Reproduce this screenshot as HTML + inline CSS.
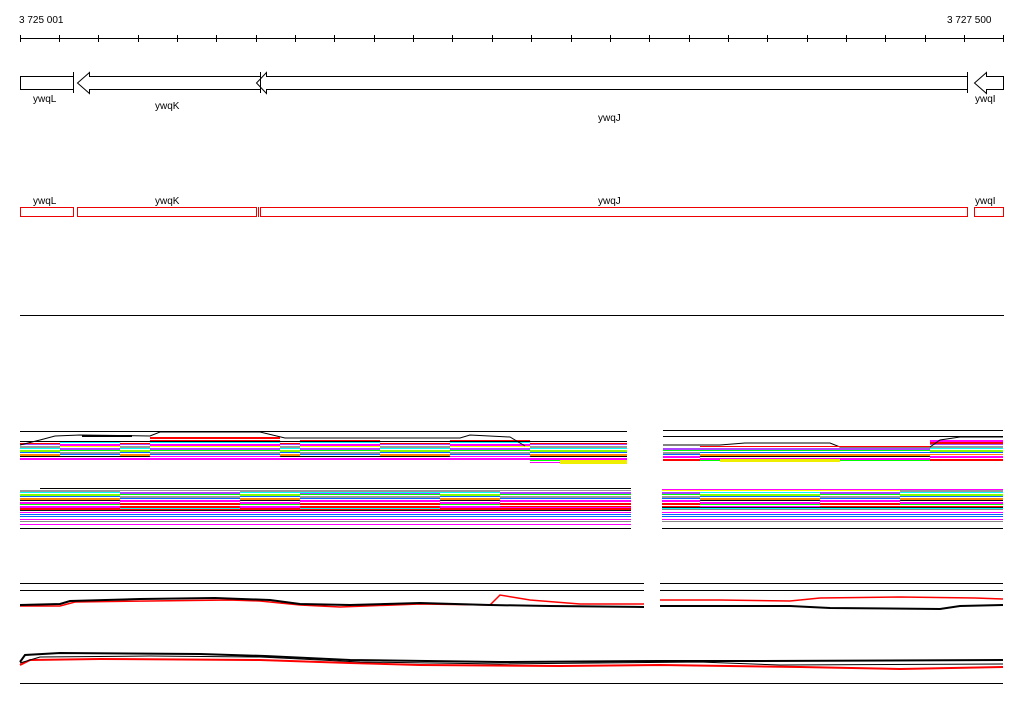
<!DOCTYPE html>
<html><head><meta charset="utf-8"><style>
html,body{margin:0;padding:0;background:#fff;}
svg{display:block}
text{font-family:"Liberation Sans",sans-serif;font-size:10px;fill:#000}
</style></head><body>
<svg width="1024" height="714" viewBox="0 0 1024 714" xmlns="http://www.w3.org/2000/svg" shape-rendering="crispEdges">
<defs>
<pattern id="s1" width="40" height="22" patternUnits="userSpaceOnUse">
<rect width="40" height="22" fill="#fff"/>
<rect y="0" width="40" height="2" fill="#f0f"/><rect y="2" width="40" height="2" fill="#f00"/><rect y="4" width="40" height="1" fill="#a4f"/><rect y="6" width="40" height="2" fill="#999"/><rect y="8" width="40" height="1" fill="#0ff"/><rect y="10" width="40" height="2" fill="#8f0"/><rect y="12" width="40" height="1" fill="#06f"/><rect y="14" width="40" height="2" fill="#f80"/><rect y="16" width="40" height="1" fill="#000"/><rect y="18" width="40" height="2" fill="#f0f"/><rect y="20" width="40" height="1" fill="#0f0"/>
</pattern>
<pattern id="s2" width="40" height="22" patternUnits="userSpaceOnUse">
<rect width="40" height="22" fill="#fff"/>
<rect y="0" width="40" height="2" fill="#f00"/><rect y="2" width="40" height="1" fill="#0ff"/><rect y="4" width="40" height="2" fill="#f0f"/><rect y="6" width="40" height="1" fill="#ff0"/><rect y="8" width="40" height="2" fill="#a4f"/><rect y="10" width="40" height="1" fill="#0f0"/><rect y="12" width="40" height="2" fill="#999"/><rect y="14" width="40" height="1" fill="#06f"/><rect y="16" width="40" height="2" fill="#f0f"/><rect y="19" width="40" height="2" fill="#f00"/>
</pattern>
<pattern id="s3" width="40" height="12" patternUnits="userSpaceOnUse">
<rect width="40" height="12" fill="#fff"/>
<rect y="0" width="40" height="1" fill="#06f"/><rect y="3" width="40" height="1" fill="#f0f"/><rect y="5" width="40" height="1" fill="#888"/><rect y="8" width="40" height="1" fill="#f0f"/><rect y="10" width="40" height="1" fill="#06f"/>
</pattern>
</defs>
<!-- ruler -->
<text x="19" y="23">3 725 001</text>
<text x="947" y="23">3 727 500</text>
<line x1="20" y1="38.5" x2="1004" y2="38.5" stroke="#000"/>
<g stroke="#000">
<line x1="20.5" y1="35" x2="20.5" y2="42"/><line x1="59.5" y1="35" x2="59.5" y2="42"/><line x1="98.5" y1="35" x2="98.5" y2="42"/><line x1="138.5" y1="35" x2="138.5" y2="42"/><line x1="177.5" y1="35" x2="177.5" y2="42"/><line x1="216.5" y1="35" x2="216.5" y2="42"/><line x1="256.5" y1="35" x2="256.5" y2="42"/><line x1="295.5" y1="35" x2="295.5" y2="42"/><line x1="334.5" y1="35" x2="334.5" y2="42"/><line x1="374.5" y1="35" x2="374.5" y2="42"/><line x1="413.5" y1="35" x2="413.5" y2="42"/><line x1="452.5" y1="35" x2="452.5" y2="42"/><line x1="492.5" y1="35" x2="492.5" y2="42"/><line x1="531.5" y1="35" x2="531.5" y2="42"/><line x1="571.5" y1="35" x2="571.5" y2="42"/><line x1="610.5" y1="35" x2="610.5" y2="42"/><line x1="649.5" y1="35" x2="649.5" y2="42"/><line x1="689.5" y1="35" x2="689.5" y2="42"/><line x1="728.5" y1="35" x2="728.5" y2="42"/><line x1="767.5" y1="35" x2="767.5" y2="42"/><line x1="807.5" y1="35" x2="807.5" y2="42"/><line x1="846.5" y1="35" x2="846.5" y2="42"/><line x1="885.5" y1="35" x2="885.5" y2="42"/><line x1="925.5" y1="35" x2="925.5" y2="42"/><line x1="964.5" y1="35" x2="964.5" y2="42"/><line x1="1003.5" y1="35" x2="1003.5" y2="42"/>
</g>
<!-- genes -->
<g fill="#fff" stroke="#000" stroke-width="1" shape-rendering="auto">
<rect x="20.5" y="76.5" width="53" height="13"/>
<polygon points="77.5,83 89.5,72.5 89.5,76.5 260.5,76.5 260.5,89.5 89.5,89.5 89.5,93.5"/>
<polygon points="256.5,83 266.5,72.5 266.5,76.5 967.5,76.5 967.5,89.5 266.5,89.5 266.5,93.5"/>
<polygon points="974.5,83 986.5,72.5 986.5,76.5 1003.5,76.5 1003.5,89.5 986.5,89.5 986.5,93.5"/>
<line x1="73.5" y1="72" x2="73.5" y2="93"/><line x1="260.5" y1="72" x2="260.5" y2="93"/><line x1="967.5" y1="72" x2="967.5" y2="93"/>
</g>
<text x="33" y="102">ywqL</text>
<text x="155" y="109">ywqK</text>
<text x="598" y="121">ywqJ</text>
<text x="975" y="102">ywqI</text>
<text x="33" y="204">ywqL</text>
<text x="155" y="204">ywqK</text>
<text x="598" y="204">ywqJ</text>
<text x="975" y="204">ywqI</text>
<g fill="none" stroke="#e00">
<rect x="20.5" y="207.5" width="53" height="9"/>
<rect x="77.5" y="207.5" width="179" height="9"/>
<rect x="260.5" y="207.5" width="707" height="9"/>
<line x1="258.5" y1="207" x2="258.5" y2="217"/>
<rect x="974.5" y="207.5" width="29" height="9"/>
</g>
<line x1="20" y1="315.5" x2="1004" y2="315.5" stroke="#000"/>

<!-- block A -->
<g>
<rect x="20" y="443" width="607" height="17" fill="url(#s1)"/>
<rect x="60" y="442" width="60" height="14" fill="url(#s2)"/>
<rect x="150" y="437" width="130" height="20" fill="url(#s2)"/>
<rect x="300" y="440" width="80" height="16" fill="url(#s2)"/>
<rect x="450" y="439" width="80" height="18" fill="url(#s2)"/>
<rect x="530" y="449" width="97" height="14" fill="url(#s1)"/>
<rect x="560" y="460" width="67" height="4" fill="#ee0"/>
<line x1="20" y1="431.5" x2="627" y2="431.5" stroke="#000"/>
<line x1="20" y1="441.5" x2="627" y2="441.5" stroke="#000"/>
<polyline points="20,445 40,440 55,436 80,435 150,436 160,432 260,432 285,438 460,438 470,435 510,437 525,446" fill="none" stroke="#000" shape-rendering="auto"/>
<rect x="82" y="435" width="50" height="2" fill="#000"/>
</g>
<!-- block B -->
<g>
<rect x="663" y="447" width="340" height="14" fill="url(#s2)"/>
<rect x="700" y="452" width="230" height="10" fill="url(#s1)"/>
<rect x="930" y="440" width="73" height="15" fill="url(#s1)"/>
<rect x="720" y="459" width="120" height="3" fill="#ee0"/>
<line x1="663" y1="430.5" x2="1003" y2="430.5" stroke="#000"/>
<line x1="663" y1="436.5" x2="1003" y2="436.5" stroke="#000"/>
<polyline points="663,445 720,445 745,443 830,443 840,447 930,447 940,440 960,437 1003,437" fill="none" stroke="#000" shape-rendering="auto"/>
<line x1="700" y1="446.5" x2="930" y2="446.5" stroke="#f00"/>
</g>
<!-- block C -->
<g>
<rect x="20" y="489" width="611" height="22" fill="url(#s1)"/>
<rect x="20" y="511" width="611" height="14" fill="url(#s3)"/>
<rect x="120" y="491" width="120" height="18" fill="url(#s2)"/>
<rect x="300" y="493" width="140" height="16" fill="url(#s2)"/>
<rect x="500" y="491" width="131" height="16" fill="url(#s2)"/>
<line x1="20" y1="528.5" x2="631" y2="528.5" stroke="#000"/>
<line x1="40" y1="488.5" x2="631" y2="488.5" stroke="#000"/>
<line x1="20" y1="510.5" x2="631" y2="510.5" stroke="#111"/>
</g>
<!-- block D -->
<g>
<rect x="662" y="489" width="341" height="20" fill="url(#s2)"/>
<rect x="662" y="509" width="341" height="15" fill="url(#s3)"/>
<rect x="700" y="492" width="120" height="16" fill="url(#s1)"/>
<rect x="900" y="490" width="103" height="16" fill="url(#s1)"/>
<line x1="662" y1="528.5" x2="1003" y2="528.5" stroke="#000"/>
<line x1="662" y1="507.5" x2="1003" y2="507.5" stroke="#111"/>
</g>
<!-- lower -->
<g fill="none" shape-rendering="auto">
<line x1="20" y1="583.5" x2="644" y2="583.5" stroke="#000"/>
<line x1="20" y1="590.5" x2="644" y2="590.5" stroke="#000"/>
<line x1="660" y1="583.5" x2="1003" y2="583.5" stroke="#000"/>
<line x1="660" y1="590.5" x2="1003" y2="590.5" stroke="#000"/>
<polyline points="20,606 60,606 75,602 150,601 230,600 260,601 300,605 340,607 420,604 490,605 500,595 530,600 580,604 644,604" stroke="#f00" stroke-width="1.5"/>
<polyline points="20,605 60,604 70,601 140,599 215,598 270,600 300,604 350,605 420,603 490,605 550,606 644,607" stroke="#000" stroke-width="2"/>
<polyline points="660,600 720,600 790,601 820,598 900,597 975,598 1003,599" stroke="#f00" stroke-width="1.5"/>
<polyline points="660,606 790,606 830,608 940,609 960,606 1003,605" stroke="#000" stroke-width="2"/>
<polyline points="20,662 25,655 60,653 200,654 265,656 350,660 500,662 660,661 760,661 1003,660" stroke="#000" stroke-width="2"/>
<polyline points="20,665 30,660 100,659 260,660 350,663 420,665 560,666 660,665 800,667 900,669 1003,667" stroke="#f00" stroke-width="2"/>
<polyline points="20,663 40,657 150,656 260,657 360,662 500,664 700,662 780,665 1003,664" stroke="#000" stroke-width="1"/>
<line x1="20" y1="683.5" x2="1003" y2="683.5" stroke="#000"/>
</g>
</svg>
</body></html>
